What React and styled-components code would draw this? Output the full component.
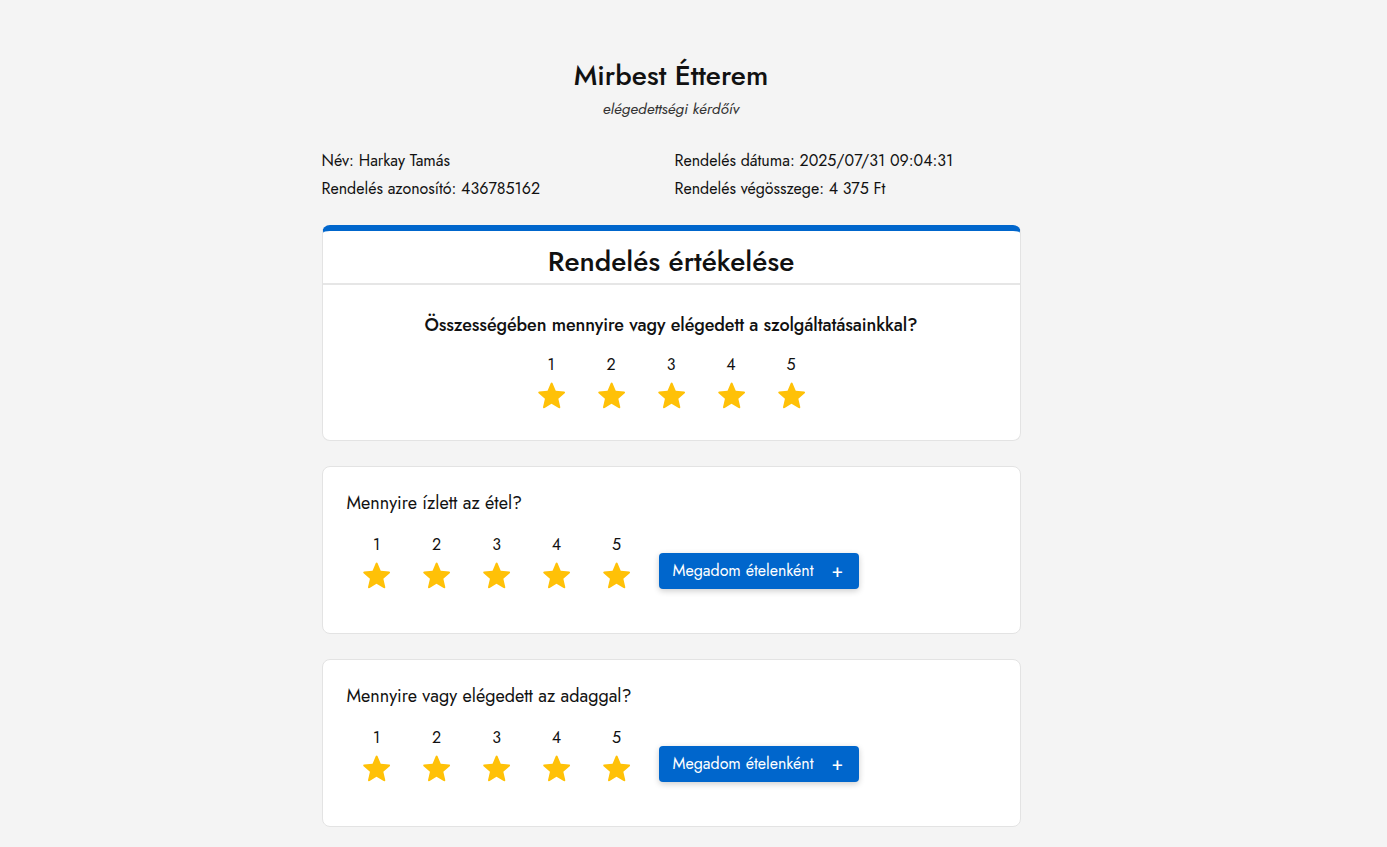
import React from "react";
import styled, { createGlobalStyle } from "styled-components";

const GlobalStyle = createGlobalStyle`
  body {
    margin: 0;
    background: #f4f4f4;
    font-family: "Jost", Lato, "Open Sans", sans-serif;
    color: #111;
  }
`;

const Page = styled.div`
  padding: 0 45px 40px 0;
`;

const Container = styled.div`
  width: 699px;
  margin: 0 auto;
`;

const Header = styled.header`
  text-align: center;
  padding-top: 58px;
`;

const Title = styled.h1`
  margin: 0;
  font-size: 28px;
  font-weight: 500;
  line-height: 36px;
`;

const Subtitle = styled.div`
  font-size: 15.5px;
  font-style: italic;
  color: #333;
  line-height: 24px;
  margin-top: 3px;
`;

const InfoGrid = styled.div`
  display: grid;
  grid-template-columns: 353px 1fr;
  margin-top: 26px;
  font-size: 16px;
  line-height: 28px;
`;

const Card = styled.section`
  background: #fff;
  border: 1px solid #e3e3e3;
  border-top: ${(p) => (p.$accent ? "6px solid #0066cc" : "1px solid #e3e3e3")};
  border-radius: 8px;
  margin-top: ${(p) => (p.$accent ? "22px" : "25px")};
  padding: ${(p) => (p.$accent ? "0 0 27px" : "23px 24px 40px")};
`;

const CardTitle = styled.h2`
  margin: 0;
  padding: 11px 0 1px;
  text-align: center;
  font-size: 28px;
  font-weight: 500;
  line-height: 40px;
  border-bottom: 2px solid #e6e6e6;
`;

const Question = styled.div`
  font-size: 18px;
  font-weight: ${(p) => (p.$center ? 500 : 400)};
  letter-spacing: ${(p) => (p.$center ? "-0.1px" : "0")};
  text-align: ${(p) => (p.$center ? "center" : "left")};
  line-height: 26px;
  margin-top: ${(p) => (p.$center ? "27px" : "0")};
`;

const Row = styled.div`
  display: flex;
  align-items: center;
  justify-content: ${(p) => (p.$center ? "center" : "flex-start")};
  gap: 12px;
  margin-top: ${(p) => (p.$center ? "16px" : "18px")};
`;

const Stars = styled.div`
  display: flex;
`;

const Rate = styled.label`
  width: 60px;
  display: flex;
  flex-direction: column;
  align-items: center;
  font-size: 16px;
  line-height: 22px;
  cursor: pointer;
`;

const StarIcon = styled.svg`
  width: 33px;
  height: 33px;
  margin-top: 4px;
  fill: #ffc107;
`;

const Button = styled.button`
  display: flex;
  align-items: center;
  gap: 18px;
  height: 36px;
  padding: 0 16px 0 14px;
  background: #0066cc;
  color: #fff;
  border: none;
  border-radius: 4px;
  font-family: inherit;
  font-size: 16px;
  box-shadow: 0 2px 6px rgba(0, 0, 0, 0.2);
  margin-top: 14px;
  cursor: pointer;
`;

const Plus = styled.span`
  font-size: 19px;
  line-height: 1;
`;

const Star = () => (
  <StarIcon viewBox="0 0 24 24">
    <path d="M12 17.27l5.2 3.14c.6.36 1.33-.17 1.17-.85l-1.38-5.91 4.6-3.98c.53-.46.25-1.33-.45-1.39l-6.05-.51-2.37-5.58a.66.66 0 0 0-1.220 0L9.13 7.77l-6.05.51c-.7.06-.98.93-.45 1.39l4.6 3.98-1.38 5.91c-.16.68.57 1.21 1.17.85z" />
  </StarIcon>
);

const Rating = () => (
  <Stars>
    {[1, 2, 3, 4, 5].map((n) => (
      <Rate key={n}>
        {n}
        <Star />
      </Rate>
    ))}
  </Stars>
);

const Block = ({ question }) => (
  <Card>
    <Question>{question}</Question>
    <Row>
      <Rating />
      <Button>
        Megadom ételenként <Plus>+</Plus>
      </Button>
    </Row>
  </Card>
);

export default function App() {
  return (
    <Page>
      <GlobalStyle />
      <Container>
        <Header>
          <Title>Mirbest Étterem</Title>
          <Subtitle>elégedettségi kérdőív</Subtitle>
        </Header>
        <InfoGrid>
          <div>Név: Harkay Tamás</div>
          <div>Rendelés dátuma: 2025/07/31 09:04:31</div>
          <div>Rendelés azonosító: 436785162</div>
          <div>Rendelés végösszege: 4 375 Ft</div>
        </InfoGrid>
        <Card $accent>
          <CardTitle>Rendelés értékelése</CardTitle>
          <Question $center>
            Összességében mennyire vagy elégedett a szolgáltatásainkkal?
          </Question>
          <Row $center>
            <Rating />
          </Row>
        </Card>
        <Block question="Mennyire ízlett az étel?" />
        <Block question="Mennyire vagy elégedett az adaggal?" />
      </Container>
    </Page>
  );
}
